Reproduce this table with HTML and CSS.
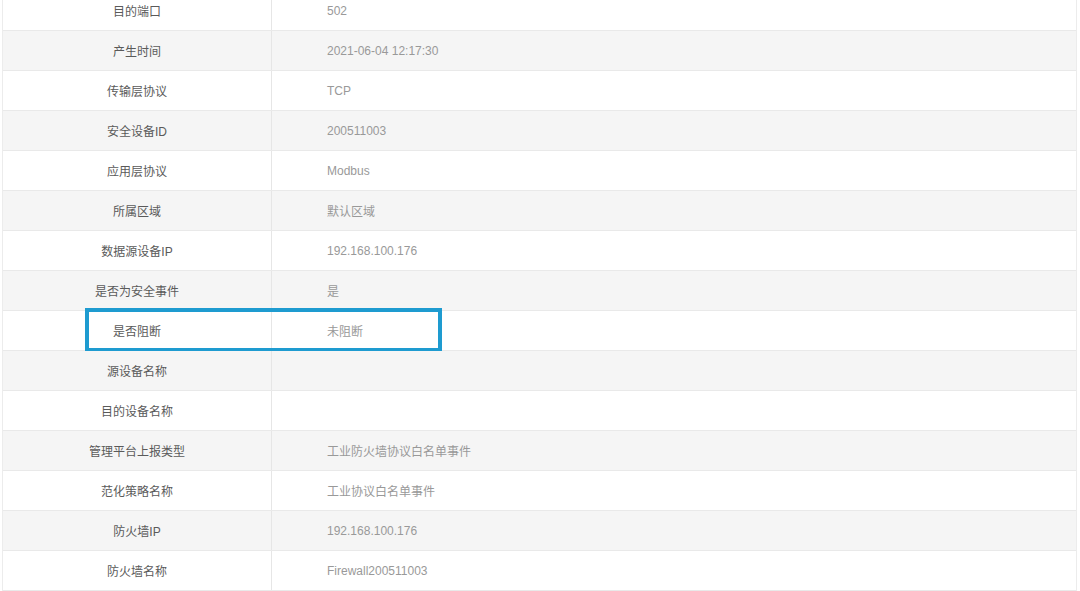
FILE: index.html
```html
<!DOCTYPE html>
<html lang="zh-CN">
<head>
<meta charset="utf-8">
<title>事件详情</title>
<link rel="stylesheet" href="styles.css">
</head>
<body>
<div class="detail">
  <div class="row"><div class="label">目的端口</div><div class="value">502</div></div>
  <div class="row"><div class="label">产生时间</div><div class="value">2021-06-04 12:17:30</div></div>
  <div class="row"><div class="label">传输层协议</div><div class="value">TCP</div></div>
  <div class="row"><div class="label">安全设备ID</div><div class="value">200511003</div></div>
  <div class="row"><div class="label">应用层协议</div><div class="value">Modbus</div></div>
  <div class="row"><div class="label">所属区域</div><div class="value">默认区域</div></div>
  <div class="row"><div class="label">数据源设备IP</div><div class="value">192.168.100.176</div></div>
  <div class="row"><div class="label">是否为安全事件</div><div class="value">是</div></div>
  <div class="row marked"><div class="label">是否阻断</div><div class="value">未阻断</div><div class="highlight"></div></div>
  <div class="row"><div class="label">源设备名称</div><div class="value"></div></div>
  <div class="row"><div class="label">目的设备名称</div><div class="value"></div></div>
  <div class="row"><div class="label">管理平台上报类型</div><div class="value">工业防火墙协议白名单事件</div></div>
  <div class="row"><div class="label">范化策略名称</div><div class="value">工业协议白名单事件</div></div>
  <div class="row"><div class="label">防火墙IP</div><div class="value">192.168.100.176</div></div>
  <div class="row"><div class="label">防火墙名称</div><div class="value">Firewall200511003</div></div>
</div>
</body>
</html>
```

FILE: styles.css
```css
html, body {
  margin: 0;
  padding: 0;
  background: #ffffff;
}

body {
  font-family: "Liberation Sans", "Noto Sans CJK SC", sans-serif;
  font-size: 12px;
  overflow: hidden;
}

.detail {
  margin: -9px 3px 0 2px;
  border-left: 1px solid #ececec;
  border-right: 1px solid #ececec;
}

.row {
  position: relative;
  display: grid;
  grid-template-columns: 269px 1fr;
  height: 40px;
  box-sizing: border-box;
  border-bottom: 1px solid #e9e9e9;
  background: #ffffff;
}

.row:nth-child(even) {
  background: #f5f5f5;
}

.label {
  display: flex;
  align-items: center;
  justify-content: center;
  color: #5a5a5a;
  border-right: 1px solid #e6e6e6;
}

.value {
  display: flex;
  align-items: center;
  padding-left: 55px;
  color: #999999;
}

.highlight {
  position: absolute;
  left: 82px;
  top: -3px;
  width: 357px;
  height: 44px;
  box-sizing: border-box;
  border: 4px solid #1e9bd0;
  pointer-events: none;
}
```
